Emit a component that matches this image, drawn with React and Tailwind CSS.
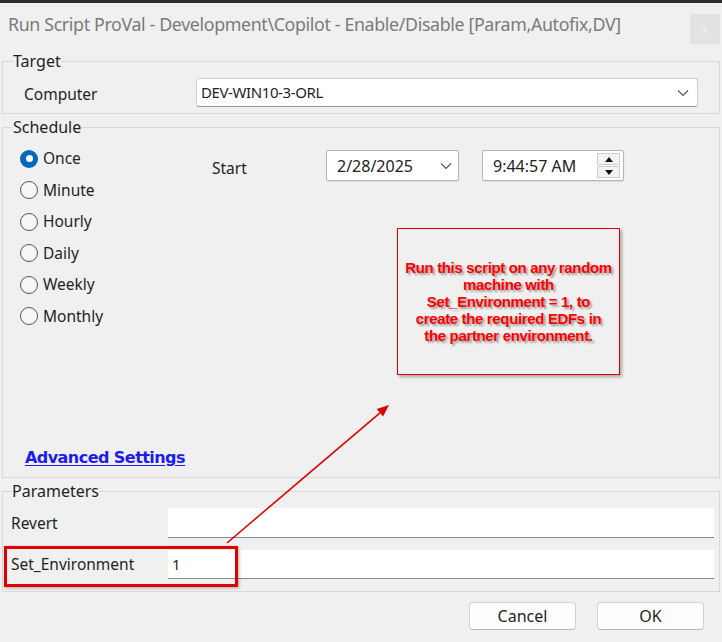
import React from 'react';

const FONT = { fontFamily: '"Noto Sans", "Liberation Sans", sans-serif' };

const Radio = ({ label, checked }) => (
    <div className="flex h-[31.5px] items-center gap-[5px]">
        {checked ? (
            <span className="flex h-[18px] w-[18px] items-center justify-center rounded-full bg-[#0067c0]">
                <span className="h-[7px] w-[7px] rounded-full bg-white" />
            </span>
        ) : (
            <span className="h-[18px] w-[18px] rounded-full border border-[#555] bg-[#f7f7f7]" />
        )}
        <span className="text-[15.5px] text-[#1f1f1f]">{label}</span>
    </div>
);

const Chevron = () => (
    <svg width="12" height="8" viewBox="0 0 12 8" fill="none" stroke="#555" strokeWidth="1.1">
        <path d="M1 1.5 L6 6.5 L11 1.5" />
    </svg>
);

export default function App() {
    return (
        <div className="relative h-[642px] w-[722px] overflow-hidden bg-[#f0f0f0] text-[#1f1f1f]" style={FONT}>
            <div className="h-[3px] bg-[#2e2e2e]" />

            {/* title bar */}
            <div className="flex h-[47px] items-start justify-between pl-[8px]">
                <div className="mt-[8px] text-[17.8px] leading-[26px] tracking-[-0.35px] text-[#7b7b7b]">
                    Run Script ProVal - Development\Copilot - Enable/Disable [Param,Autofix,DV]
                </div>
                <div className="mr-[2px] mt-[11px] flex h-[30px] w-[30px] items-center justify-center bg-[#e2e2e2] text-[11px] text-[#f4f4f4]">
                    x
                </div>
            </div>

            <div className="px-[2px]">
                {/* Target */}
                <fieldset className="mt-[1px] h-[63px] border border-[#d8d8d8] px-[21px]">
                    <legend className="ml-[-11px] text-[16px] leading-[20px]">Target</legend>
                    <div className="mt-[7px] flex items-start">
                        <span className="w-[172px] pt-[5px] text-[15.5px]">Computer</span>
                        <div className="flex h-[29px] flex-1 items-center justify-between rounded-[3px] border border-[#cfcfcf] border-b-[#9a9a9a] bg-white pl-[4px] pr-[8px]">
                            <span className="text-[15px] tracking-[-0.4px]">DEV-WIN10-3-ORL</span>
                            <Chevron />
                        </div>
                    </div>
                </fieldset>

                {/* Schedule */}
                <fieldset className="mt-[3px] flex h-[361px] flex-col border border-[#d8d8d8] pl-[17px]">
                    <legend className="ml-[-7px] text-[16px] leading-[20px]">Schedule</legend>
                    <div className="flex">
                        <div className="mt-[6px] flex w-[192px] flex-col">
                            <Radio label="Once" checked />
                            <Radio label="Minute" />
                            <Radio label="Hourly" />
                            <Radio label="Daily" />
                            <Radio label="Weekly" />
                            <Radio label="Monthly" />
                        </div>
                        <div className="mt-[13px] flex items-start">
                            <span className="mt-[7px] w-[114px] text-[15.5px]">Start</span>
                            <div className="flex h-[31px] w-[133px] items-center justify-between rounded-[2px] border border-[#b5b5b5] bg-white pl-[10px] pr-[6px] shadow-[0_1px_1px_rgba(0,0,0,0.08)]">
                                <span className="text-[16px] text-[#222]">2/28/2025</span>
                                <Chevron />
                            </div>
                            <div className="ml-[23px] flex h-[31px] w-[142px] items-center justify-between rounded-[2px] border border-[#b5b5b5] bg-white pl-[10px] pr-[3px] shadow-[0_1px_1px_rgba(0,0,0,0.08)]">
                                <span className="text-[16px] text-[#222]">9:44:57 AM</span>
                                <div className="flex h-[25px] w-[23px] flex-col gap-[1px]">
                                    <div className="flex flex-1 items-center justify-center border border-[#cfcfcf] bg-[#f3f3f3]">
                                        <span className="h-0 w-0 border-x-[4px] border-b-[5px] border-x-transparent border-b-[#111]" />
                                    </div>
                                    <div className="flex flex-1 items-center justify-center border border-[#cfcfcf] bg-[#f3f3f3]">
                                        <span className="h-0 w-0 border-x-[4px] border-t-[5px] border-x-transparent border-t-[#111]" />
                                    </div>
                                </div>
                            </div>
                        </div>
                    </div>
                    <div className="mb-[7px] mt-auto pl-[5px]">
                        <span
                            className="text-[16px] font-bold tracking-[-0.55px] text-[#1c1cf0] underline underline-offset-[2px]"
                            style={{ fontFamily: '"DejaVu Sans", Verdana, sans-serif' }}
                        >
                            Advanced Settings
                        </span>
                    </div>
                </fieldset>

                {/* Parameters */}
                <fieldset className="mt-[3px] h-[111px] border border-[#d8d8d8] pl-[8px] pr-[5px]">
                    <legend className="ml-[1px] text-[16px] leading-[20px]">Parameters</legend>
                    <div className="mt-[7px] flex flex-col gap-[12px]">
                        <div className="flex items-center">
                            <span className="w-[157px] pt-[1px] text-[15.5px]">Revert</span>
                            <div className="h-[30px] flex-1 border-b border-[#8a8a8a] bg-white" />
                        </div>
                        <div className="flex items-center">
                            <span className="w-[157px] pt-[1px] text-[15.5px]">Set_Environment</span>
                            <div className="flex h-[29px] flex-1 items-center border-b border-[#8a8a8a] bg-white pl-[4px] text-[15px]">
                                1
                            </div>
                        </div>
                    </div>
                </fieldset>

                {/* buttons */}
                <div className="mt-[10px] flex justify-end gap-[21px] pr-[16px]">
                    <button className="h-[28px] w-[107px] rounded-[4px] border border-[#d0d0d0] border-b-[#b8b8b8] bg-[#fdfdfd] text-[16px]">
                        Cancel
                    </button>
                    <button className="h-[28px] w-[107px] rounded-[4px] border border-[#d0d0d0] border-b-[#b8b8b8] bg-[#fdfdfd] text-[16px]">
                        OK
                    </button>
                </div>
            </div>

            {/* annotation callout */}
            <div className="absolute left-[397px] top-[228px] flex h-[147px] w-[223px] items-center justify-center border border-[#e00000] shadow-[2px_2px_3px_rgba(0,0,0,0.3)]">
                <p
                    className="text-center text-[15px] font-bold leading-[17px] tracking-[-0.35px] text-[#ff0000] [text-shadow:2px_2px_2px_rgba(0,0,0,0.35)]"
                    style={{ fontFamily: '"Liberation Sans", Arial, sans-serif' }}
                >
                    Run this script on any random
                    <br />
                    machine with
                    <br />
                    Set_Environment = 1, to
                    <br />
                    create the required EDFs in
                    <br />
                    the partner environment.
                </p>
            </div>

            {/* highlight around Set_Environment */}
            <div className="pointer-events-none absolute left-[4px] top-[546px] h-[41px] w-[234px] border-[3px] border-[#e00000] shadow-[1px_1px_3px_rgba(0,0,0,0.3)]" />

            {/* arrow */}
            <svg className="pointer-events-none absolute left-0 top-0" width="722" height="642">
                <line x1="227" y1="543" x2="380" y2="412.8" stroke="#e00000" strokeWidth="1.6" />
                <polygon points="389,405 383.1,416.6 376.7,409" fill="#e00000" />
            </svg>
        </div>
    );
}
